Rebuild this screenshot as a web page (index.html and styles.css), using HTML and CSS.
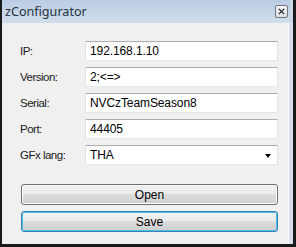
FILE: index.html
```html
<!DOCTYPE html>
<html>
<head>
<meta charset="utf-8">
<link rel="stylesheet" href="styles.css">
</head>
<body>
<div class="window">
  <div class="titlebar">
    <span class="title">zConfigurator</span>
    <span class="close">
      <svg width="12" height="13" viewBox="0 0 12 13">
        <path d="M3.5 4 L8.5 9 M8.5 4 L3.5 9" stroke="#ffffff" stroke-width="3.2" stroke-linecap="square"/>
        <path d="M3.5 4 L8.5 9 M8.5 4 L3.5 9" stroke="#3a3a3a" stroke-width="1.6" stroke-linecap="square"/>
      </svg>
    </span>
  </div>
  <div class="client">
    <div class="form">
      <label class="lbl">IP:</label>
      <div class="field">192.168.1.10</div>
      <label class="lbl">Version:</label>
      <div class="field">2;&lt;=&gt;</div>
      <label class="lbl">Serial:</label>
      <div class="field">NVCzTeamSeason8</div>
      <label class="lbl">Port:</label>
      <div class="field">44405</div>
      <label class="lbl">GFx lang:</label>
      <div class="field select"><span>THA</span><span class="arrow"></span></div>
    </div>
    <div class="buttons">
      <div class="btn">Open</div>
      <div class="btn default">Save</div>
    </div>
  </div>
</div>
</body>
</html>
```

FILE: styles.css
```css
* { box-sizing: border-box; }
html, body {
  margin: 0;
  padding: 0;
  background: #1a1a1a;
}
.window {
  width: 296px;
  height: 247px;
  background: #1a1a1a;
  padding: 0 3px 3px 2px;
  display: flex;
  flex-direction: column;
}
.titlebar {
  height: 23px;
  background: linear-gradient(#b9cce3, #d2deec);
  display: flex;
  align-items: center;
  justify-content: space-between;
  padding: 0 2px 0 3px;
  border-right: 3px solid #c9d7e7;
}
.title {
  font-family: "Noto Sans", "DejaVu Sans", sans-serif;
  font-size: 12.6px;
  color: #26323e;
  margin-top: -1px;
}
.close {
  width: 13px;
  height: 13px;
  border: 1px solid #6f747a;
  border-radius: 2px;
  background: linear-gradient(#f4f6f9, #d8dee6);
  display: flex;
  align-items: center;
  justify-content: center;
  margin-top: -1px;
}
.close svg { display: block; }
.client {
  flex: 1;
  background: #f0f0f0;
  border-right: 4px solid #d6dfe9;
  box-shadow: inset -1px 0 0 #fafafa;
  padding: 18px 11px 0 18px;
  font-family: "Liberation Sans", Arial, sans-serif;
  font-size: 11.5px;
  color: #000;
}
.form {
  display: grid;
  grid-template-columns: 65px 1fr;
  row-gap: 6px;
  align-items: center;
}
.lbl {
  letter-spacing: -0.5px;
  color: #1a1a1a;
}
.field {
  height: 20px;
  background: #fff;
  border: 1px solid #e2e3ea;
  border-top-color: #abadb3;
  border-bottom-color: #e3e9ef;
  border-radius: 1px;
  padding: 0 4px;
  display: flex;
  align-items: center;
  font-size: 12px;
  letter-spacing: -0.1px;
}
.select {
  justify-content: space-between;
}
.arrow {
  width: 0;
  height: 0;
  border-left: 3.5px solid transparent;
  border-right: 3.5px solid transparent;
  border-top: 4px solid #000;
  margin-right: 2px;
  margin-top: 1px;
}
.buttons {
  display: flex;
  flex-direction: column;
  gap: 6px;
  margin: 19px 0 0 1px;
}
.btn {
  height: 21px;
  border: 1px solid #707070;
  border-radius: 3px;
  background: linear-gradient(#f2f2f2 0%, #ebebeb 49%, #dddddd 50%, #cfcfcf 100%);
  box-shadow: inset 0 0 0 1px #fcfcfc;
  display: flex;
  align-items: center;
  justify-content: center;
  font-size: 12px;
}
.btn.default {
  border-color: #3c7fb1;
  box-shadow: inset 0 0 0 1px #48c0ea;
}
```
